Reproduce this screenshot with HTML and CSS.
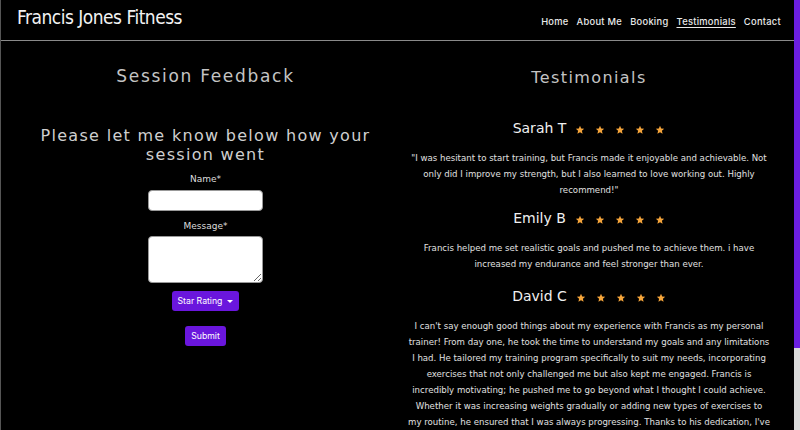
FILE: index.html
```html
<!DOCTYPE html>
<html lang="en">
<head>
<meta charset="utf-8">
<title>Francis Jones Fitness</title>
<link rel="stylesheet" href="styles.css">
</head>
<body>
<div class="page">
  <div class="main">
    <header class="header">
      <div class="brand">Francis Jones Fitness</div>
      <nav class="nav">
        <a href="#">Home</a>
        <a href="#">About Me</a>
        <a href="#">Booking</a>
        <a href="#" class="active">Testimonials</a>
        <a href="#">Contact</a>
      </nav>
    </header>
    <div class="content">
      <section class="col left">
        <h1 class="heading">Session Feedback</h1>
        <h2 class="subheading">Please let me know below how your session went</h2>
        <form class="form">
          <label class="label">Name*</label>
          <input class="input" type="text">
          <label class="label">Message*</label>
          <textarea class="textarea"></textarea>
          <button type="button" class="btn dropdown">Star Rating <span class="caret"></span></button>
          <button type="button" class="btn submit">Submit</button>
        </form>
      </section>
      <section class="col right">
        <h1 class="heading small">Testimonials</h1>
        <div class="review first">
          <div class="review-head"><span class="name">Sarah T</span><span class="stars">
            <svg viewBox="0 0 24 24"><path d="M12 2l2.9 6.6 7.1.6-5.4 4.7 1.6 7-6.2-3.7-6.2 3.7 1.6-7L2 9.2l7.1-.6z"/></svg>
            <svg viewBox="0 0 24 24"><path d="M12 2l2.9 6.6 7.1.6-5.4 4.7 1.6 7-6.2-3.7-6.2 3.7 1.6-7L2 9.2l7.1-.6z"/></svg>
            <svg viewBox="0 0 24 24"><path d="M12 2l2.9 6.6 7.1.6-5.4 4.7 1.6 7-6.2-3.7-6.2 3.7 1.6-7L2 9.2l7.1-.6z"/></svg>
            <svg viewBox="0 0 24 24"><path d="M12 2l2.9 6.6 7.1.6-5.4 4.7 1.6 7-6.2-3.7-6.2 3.7 1.6-7L2 9.2l7.1-.6z"/></svg>
            <svg viewBox="0 0 24 24"><path d="M12 2l2.9 6.6 7.1.6-5.4 4.7 1.6 7-6.2-3.7-6.2 3.7 1.6-7L2 9.2l7.1-.6z"/></svg>
          </span></div>
          <p class="text">"I was hesitant to start training, but Francis made it enjoyable and achievable. Not only did I improve my strength, but I also learned to love working out. Highly recommend!"</p>
        </div>
        <div class="review">
          <div class="review-head"><span class="name">Emily B</span><span class="stars">
            <svg viewBox="0 0 24 24"><path d="M12 2l2.9 6.6 7.1.6-5.4 4.7 1.6 7-6.2-3.7-6.2 3.7 1.6-7L2 9.2l7.1-.6z"/></svg>
            <svg viewBox="0 0 24 24"><path d="M12 2l2.9 6.6 7.1.6-5.4 4.7 1.6 7-6.2-3.7-6.2 3.7 1.6-7L2 9.2l7.1-.6z"/></svg>
            <svg viewBox="0 0 24 24"><path d="M12 2l2.9 6.6 7.1.6-5.4 4.7 1.6 7-6.2-3.7-6.2 3.7 1.6-7L2 9.2l7.1-.6z"/></svg>
            <svg viewBox="0 0 24 24"><path d="M12 2l2.9 6.6 7.1.6-5.4 4.7 1.6 7-6.2-3.7-6.2 3.7 1.6-7L2 9.2l7.1-.6z"/></svg>
            <svg viewBox="0 0 24 24"><path d="M12 2l2.9 6.6 7.1.6-5.4 4.7 1.6 7-6.2-3.7-6.2 3.7 1.6-7L2 9.2l7.1-.6z"/></svg>
          </span></div>
          <p class="text">Francis helped me set realistic goals and pushed me to achieve them. i have increased my endurance and feel stronger than ever.</p>
        </div>
        <div class="review last">
          <div class="review-head"><span class="name">David C</span><span class="stars">
            <svg viewBox="0 0 24 24"><path d="M12 2l2.9 6.6 7.1.6-5.4 4.7 1.6 7-6.2-3.7-6.2 3.7 1.6-7L2 9.2l7.1-.6z"/></svg>
            <svg viewBox="0 0 24 24"><path d="M12 2l2.9 6.6 7.1.6-5.4 4.7 1.6 7-6.2-3.7-6.2 3.7 1.6-7L2 9.2l7.1-.6z"/></svg>
            <svg viewBox="0 0 24 24"><path d="M12 2l2.9 6.6 7.1.6-5.4 4.7 1.6 7-6.2-3.7-6.2 3.7 1.6-7L2 9.2l7.1-.6z"/></svg>
            <svg viewBox="0 0 24 24"><path d="M12 2l2.9 6.6 7.1.6-5.4 4.7 1.6 7-6.2-3.7-6.2 3.7 1.6-7L2 9.2l7.1-.6z"/></svg>
            <svg viewBox="0 0 24 24"><path d="M12 2l2.9 6.6 7.1.6-5.4 4.7 1.6 7-6.2-3.7-6.2 3.7 1.6-7L2 9.2l7.1-.6z"/></svg>
          </span></div>
          <p class="text">I can't say enough good things about my experience with Francis as my personal trainer! From day one, he took the time to understand my goals and any limitations I had. He tailored my training program specifically to suit my needs, incorporating exercises that not only challenged me but also kept me engaged. Francis is incredibly motivating; he pushed me to go beyond what I thought I could achieve. Whether it was increasing weights gradually or adding new types of exercises to my routine, he ensured that I was always progressing. Thanks to his dedication, I've improved my strength, and gained so much confidence with training. I appreciate how he always checks in with me, adjusting the plan when needed, which made every session feel personal.</p>
        </div>
      </section>
    </div>
  </div>
  <div class="scrollbar">
    <div class="thumb"></div>
    <div class="track"></div>
  </div>
</div>
</body>
</html>
```

FILE: styles.css
```css
* { box-sizing: border-box; }
html, body {
  margin: 0;
  padding: 0;
  height: 430px;
  overflow: hidden;
  background: #000;
}
body {
  font-family: "DejaVu Sans", sans-serif;
  color: #e6e6e6;
}
.page {
  display: flex;
  height: 430px;
}
.main {
  flex: 1;
  border-left: 1px solid #555;
  overflow: hidden;
  display: flex;
  flex-direction: column;
}
.scrollbar {
  width: 6px;
  display: flex;
  flex-direction: column;
}
.thumb {
  height: 348px;
  background: #6b1fe0;
}
.track {
  flex: 1;
  background: #dcdcdc;
}
.header {
  height: 41px;
  flex: none;
  border-bottom: 1px solid #8a8a8a;
  display: flex;
  align-items: center;
  justify-content: space-between;
  padding: 0 13px 0 16px;
}
.brand {
  font-family: "DejaVu Sans Condensed", "DejaVu Sans", sans-serif;
  font-size: 19px;
  letter-spacing: -0.5px;
  color: #f2f2f2;
  margin-top: -6px;
}
.nav {
  display: flex;
  gap: 8px;
  margin-top: 2px;
}
.nav a {
  font-family: Inter, "Liberation Sans", sans-serif;
  font-size: 9.3px;
  font-weight: 500;
  letter-spacing: 0.3px;
  color: #eaeaea;
  text-decoration: none;
}
.nav a.active {
  text-decoration: underline;
  text-underline-offset: 2px;
}
.content {
  display: grid;
  grid-template-columns: 399px 1fr;
  flex: 1;
}
.col {
  display: flex;
  flex-direction: column;
  align-items: center;
}
.left { padding: 0 0 0 10px; }
.right { padding: 0 20px 0 4px; }
.heading {
  font-family: "DejaVu Sans", sans-serif;
  font-weight: 400;
  font-size: 17px;
  letter-spacing: 1.7px;
  color: #c4c4c4;
  margin: 25px 0 0;
}
.heading.small {
  font-size: 16px;
  letter-spacing: 1.4px;
  margin-top: 27px;
}
.subheading {
  font-family: "DejaVu Sans", sans-serif;
  font-weight: 400;
  font-size: 16px;
  line-height: 19px;
  letter-spacing: 1.3px;
  color: #cfcfcf;
  text-align: center;
  margin: 40px 0 0;
  width: 345px;
}
.form {
  display: flex;
  flex-direction: column;
  align-items: center;
  margin-top: 9px;
}
.label {
  font-size: 9px;
  color: #ddd;
  line-height: 12px;
}
.input {
  width: 115px;
  height: 21px;
  margin-top: 5px;
  margin-bottom: 9px;
  border: 1px solid #999;
  border-radius: 4px;
  background: #fff;
}
.textarea {
  width: 115px;
  height: 47px;
  margin-top: 4px;
  border: 1px solid #999;
  border-radius: 4px;
  background: #fff;
  resize: vertical;
}
.btn {
  font-family: Inter, "Liberation Sans", sans-serif;
  font-size: 8.7px;
  color: #fff;
  background: #6a16dd;
  border: none;
  border-radius: 3px;
  padding: 0 6px;
  height: 20px;
  display: inline-flex;
  align-items: center;
  gap: 5px;
}
.dropdown { margin-top: 8px; }
.submit { margin-top: 15px; }
.caret {
  width: 0;
  height: 0;
  border-left: 3px solid transparent;
  border-right: 3px solid transparent;
  border-top: 3px solid #fff;
}
.review {
  display: flex;
  flex-direction: column;
  align-items: center;
}
.review-head {
  display: flex;
  align-items: center;
  margin-top: 12px;
}
.review.first .review-head { margin-top: 33px; }
.review.last .review-head { margin-top: 16px; }
.name {
  font-size: 14px;
  color: #f0f0f0;
  margin-right: 9px;
}
.stars {
  display: flex;
  gap: 10px;
  margin-top: 3px;
}
.stars svg {
  width: 10px;
  height: 10px;
  fill: #f5a53b;
}
.text {
  margin: 14px 0 0;
  font-size: 8.6px;
  line-height: 16px;
  text-align: center;
  color: #e0e0e0;
  width: 362px;
}
```
